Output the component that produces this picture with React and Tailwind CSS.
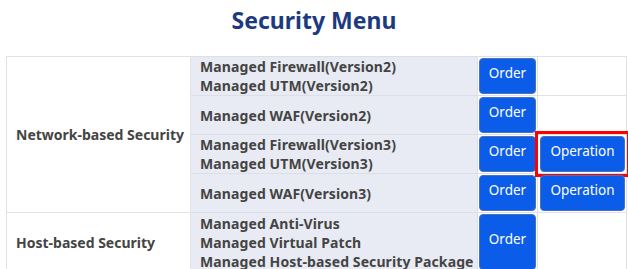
const font = { fontFamily: '"Noto Sans", "Open Sans", sans-serif' };

const rows = [
  { items: ['Managed Firewall(Version2)', 'Managed UTM(Version2)'], op: false },
  { items: ['Managed WAF(Version2)'], op: false },
  { items: ['Managed Firewall(Version3)', 'Managed UTM(Version3)'], op: true, marked: true },
  { items: ['Managed WAF(Version3)'], op: true },
];

function Btn({ children, marked, tall }) {
  return (
    <div className="relative">
      <button
        className={
          'flex w-full items-center justify-center rounded-[4px] border border-[#4a72b8] bg-[#0b5ce8] pb-[5px] text-[13.5px] text-white ' +
          (tall ? 'h-[56px]' : 'h-[36px]')
        }
      >
        {children}
      </button>
      {/* highlight box around the current action */}
      {marked && <span className="absolute -inset-[5px] border-[3px] border-[#ff0000]" aria-hidden />}
    </div>
  );
}

function ItemCell({ items }) {
  return (
    <td className="border border-[#dcdfe6] bg-[#e8ebf3] py-0 pl-[9px] align-middle text-[14px] font-bold leading-[19px] tracking-[0.1px] text-[#444]">
      {items.map((t) => (
        <div key={t}>{t}</div>
      ))}
    </td>
  );
}

export default function App() {
  return (
    <div className="h-[269px] w-[628px] overflow-hidden bg-white" style={font}>
      <h1 className="pt-[5px] pb-[20px] text-center text-[23px] font-bold leading-[31px] text-[#1b3a7f]">
        Security Menu
      </h1>

      <table className="ml-[6px] w-[620px] table-fixed border-collapse border border-[#e2e2e2]">
        <colgroup>
          <col className="w-[184px]" />
          <col className="w-[287px]" />
          <col className="w-[60px]" />
          <col className="w-[89px]" />
        </colgroup>
        <tbody>
          {rows.map((r, i) => (
            <tr key={i}>
              {i === 0 && (
                <td
                  rowSpan={4}
                  className="border border-[#e2e2e2] bg-white pl-[9px] align-middle text-[14px] font-bold text-[#444]"
                >
                  Network-based Security
                </td>
              )}
              <ItemCell items={r.items} />
              <td className="border border-[#dcdfe6] p-[1px] align-middle">
                <Btn>Order</Btn>
              </td>
              <td className="border border-[#e2e2e2] py-[1px] pr-[1px] pl-[2px] align-middle">
                {r.op && <Btn marked={r.marked}>Operation</Btn>}
              </td>
            </tr>
          ))}
          <tr>
            <td className="border border-[#e2e2e2] bg-white pl-[9px] align-middle text-[14px] font-bold text-[#444]">
              Host-based Security
            </td>
            <ItemCell
              items={[
                'Managed Anti-Virus',
                'Managed Virtual Patch',
                'Managed Host-based Security Package',
              ]}
            />
            <td className="border border-[#dcdfe6] p-[1px] align-top">
              <Btn tall>Order</Btn>
            </td>
            <td className="border border-[#e2e2e2]"></td>
          </tr>
        </tbody>
      </table>
    </div>
  );
}
